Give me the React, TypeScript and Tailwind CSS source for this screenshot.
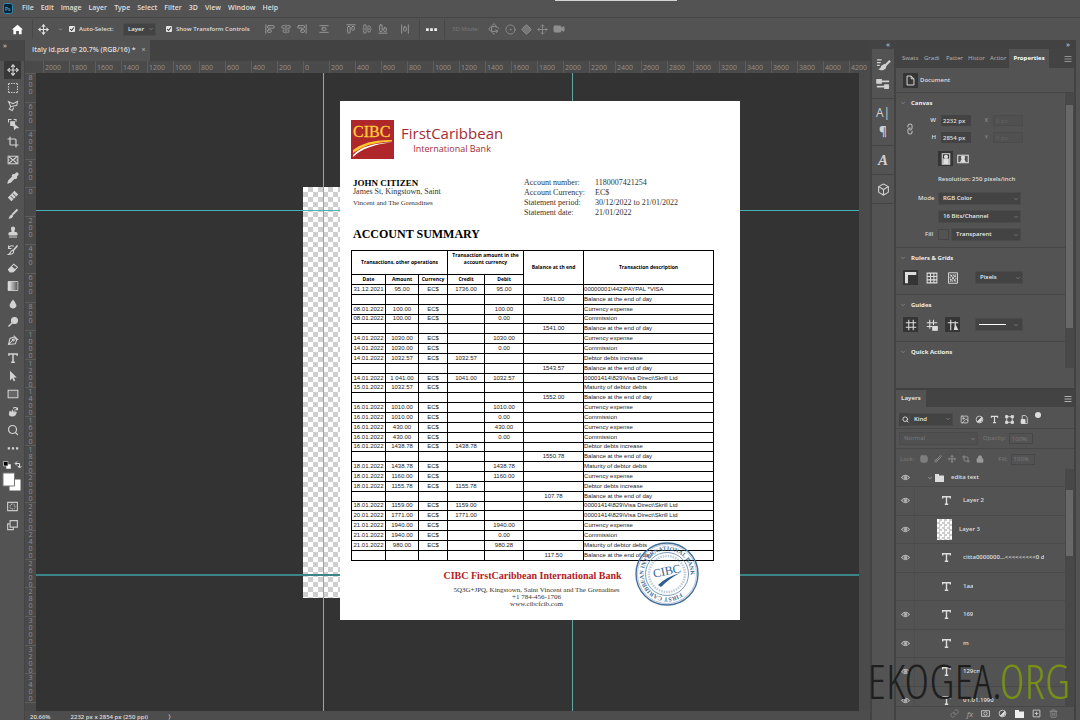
import React from 'react';
import {
  AlignCenterHorizontal, AlignCenterVertical, AlignEndHorizontal, AlignEndVertical, AlignStartHorizontal, AlignStartVertical,
  AlignVerticalSpaceAround, AlignHorizontalSpaceAround, Brush, ChevronDown, CircleDot, Crop,
  Move, Pipette, Search, SquareDashed, Stamp, Box, Grid3x3, Image as ImageIcon, Lock, Trash2, Link, Rotate3d, Diamond, Video,
} from 'lucide-react';

type Kids = { children?: React.ReactNode };

function Svg({ children, size = 12 }: Kids & { size?: number }) {
  return (
    <svg width={size} height={size} viewBox="0 0 16 16" fill="none" stroke="currentColor" strokeWidth="1.4">
      {children}
    </svg>
  );
}

const TypeT = ({ size = 12 }: { size?: number }) => (
  <Svg size={size}>
    <path d="M2.5 5V2.5h11V5M8 2.5v11M5.5 13.5h5" strokeWidth="2" />
  </Svg>
);
const Eye = () => (
  <Svg size={9}>
    <path d="M1 8q7-8 14 0q-7 8-14 0z" strokeWidth="1.8" />
    <circle cx="8" cy="8" r="2.4" fill="currentColor" />
  </Svg>
);

const lu = { size: 12, strokeWidth: 2.4 };
const tools: [string, React.ReactNode][] = [
  ['Move', <Move {...lu} />],
  ['Marquee', <SquareDashed {...lu} />],
  ['Lasso', <Svg><path d="M2 2l3 7 8-2 1-5-6 3zM5 9l-2 3 4 2 2-4" /></Svg>],
  ['Object selection', <Svg><path d="M2 6V2h4M9 2h3v3" /><path d="M5 5h5v5H5z" fill="currentColor" /><path d="M9 8l6 5-3 0-2 2z" fill="currentColor" /></Svg>],
  ['Crop', <Crop {...lu} />],
  ['Frame', <Svg><path d="M1.5 3h13v10h-13zM3 4l10 8M13 4L3 12M1.5 8h2M12.5 8h2" /></Svg>],
  ['Eyedropper', <Pipette {...lu} fill="currentColor" />],
  ['Healing', <Svg><path d="M2 10L10 2l4 4-8 8z" fill="currentColor" /><path d="M5 8l4 4M8 5l4 4" stroke="#666" /></Svg>],
  ['Brush', <Svg><path d="M14 2L7 9" strokeWidth="2.4" /><path d="M6.500 8.500q3 2 0 4.500-2 1.500-5 1 2-1 2-3 1-2 3-2.500z" fill="currentColor" stroke="none" /></Svg>],
  ['Clone stamp', <Stamp {...lu} fill="currentColor" />],
  ['History brush', <Svg><path d="M14 2L8 9" strokeWidth="2.2" /><path d="M8 8q2 3-1 5-2 1-5 1 3-2 3-4zM2 5q3-4 7-2M2 2v4h4" /></Svg>],
  ['Eraser', <Svg><path d="M2 10l7-7 5 4-6 6H4z" /><path d="M6 6.500l5 4-3 2.500H4l-2-3z" fill="currentColor" /></Svg>],
  ['Gradient', <svg width="12" height="12" viewBox="0 0 16 16"><defs><linearGradient id="tg"><stop stopColor="#eee" /><stop offset="1" stopColor="#555" /></linearGradient></defs><path d="M1.500 2h13v12h-13z" fill="url(#tg)" stroke="#ddd" /></svg>],
  ['Blur', <Svg><path d="M8 2q7 8 3 11-3 2-6 0Q1 10 8 2z" fill="currentColor" stroke="none" /></Svg>],
  ['Dodge', <Svg><circle cx="10" cy="6" r="4" fill="currentColor" /><path d="M7 9l-5 5" strokeWidth="2" /></Svg>],
  ['Pen', <Svg><path d="M2 14l2-8 5-2 4 4-2 5zM2 14l6-6M9 2l6 6" /><circle cx="8.500" cy="8" r="1.200" /></Svg>],
  ['Type', <TypeT />],
  ['Path selection', <Svg><path d="M4 1l9 9H9l2 4-2 1-2-4-3 3z" fill="currentColor" stroke="none" /></Svg>],
  ['Rectangle', <Svg><path d="M1.500 3h13v10h-13z" fill="#666" /></Svg>],
  ['Hand', <Svg><path d="M3 8q-2 6 4 6 5 0 6-6l-2-1-1 2V4L8.500 8 7 4 6 8 4 6z" fill="currentColor" stroke="none" /><path d="M8 3q4-3 6 2M14 2v3h-3" /></Svg>],
  ['Zoom', <Search {...lu} />],
  ['More tools', <Svg><path d="M1 7h3v3H1zM6.500 7h3v3h-3zM12 7h3v3h-3z" fill="currentColor" stroke="none" /></Svg>],
];

const menus = ['File', 'Edit', 'Image', 'Layer', 'Type', 'Select', 'Filter', '3D', 'View', 'Window', 'Help'];

function Check({ label }: { label: string }) {
  return (
    <label className="flex items-center gap-1 whitespace-nowrap text-[6px] font-semibold">
      <span className="grid">
        <input type="checkbox" defaultChecked className="col-start-1 row-start-1 size-[6px] appearance-none rounded-[1px] bg-[#e6e6e6]" />
        <svg viewBox="0 0 8 8" className="pointer-events-none col-start-1 row-start-1 size-[6px]" fill="none" stroke="#333" strokeWidth="1.4"><path d="M1.500 4l2 2 3-4" /></svg>
      </span>
      {label}
    </label>
  );
}

function Select({ label, value, width, dim }: { label: string; value: string; width: string; dim?: boolean }) {
  return (
    <span className={`grid items-center ${width} ${dim ? 'text-[#7d7d7d]' : 'text-[#e8e8e8]'}`}>
      <select aria-label={label} className={`col-start-1 row-start-1 h-[13px] w-full appearance-none rounded-[1px] border pl-1 text-[6px] leading-[11px] outline-none ${dim ? 'border-[#4a4a4a] bg-[#505050]' : 'border-[#4b4b4b] bg-[#434343] font-semibold'}`}>
        <option>{value}</option>
      </select>
      <ChevronDown size={6} className="pointer-events-none col-start-1 row-start-1 mr-[2px] justify-self-end text-[#a0a0a0]" />
    </span>
  );
}

function Divider() {
  return <span className="block h-5 w-px shrink-0 bg-[#484848]" />;
}

function OptionBar() {
  return (
    <div className="flex h-[23px] shrink-0 items-center border-t border-[#454545] bg-[#535353]">
      <button aria-label="Home" className="ml-3 text-white"><Svg size={11}><path d="M8 1l8 7h-2v7h-4v-5H6v5H2V8H0z" fill="currentColor" stroke="none" /></Svg></button>
      <span className="ml-[9px]"><Divider /></span>
      <button aria-label="Move tool" className="ml-[5px] flex items-center gap-[9px]"><Move size={11} strokeWidth={2.4} /><ChevronDown size={5} /></button>
      <div className="ml-[6px] flex w-[87px] items-center justify-between">
        <Check label="Auto-Select:" />
        <Select label="Auto-select target" value="Layer" width="w-[33px]" />
      </div>
      <div className="ml-[10px] w-[82px]"><Check label="Show Transform Controls" /></div>
      <div className="ml-[17px] flex items-center gap-[6px] text-[#a5a5a5]">
        <AlignStartVertical size={10} /><AlignCenterVertical size={10} /><AlignEndVertical size={10} />
        <span className="w-0" /><AlignVerticalSpaceAround size={10} />
      </div>
      <div className="ml-[17px] flex items-center gap-[6px] text-[#a5a5a5]">
        <AlignStartHorizontal size={10} /><AlignCenterHorizontal size={10} /><AlignEndHorizontal size={10} />
        <span className="w-0" /><AlignHorizontalSpaceAround size={10} />
      </div>
      <span className="ml-[9px]"><Divider /></span>
      <button aria-label="More options" className="ml-[6px] text-[#eee]"><Svg size={11}><path d="M0 6h4v4H0zM6 6h4v4H6zM12 6h4v4h-4z" fill="currentColor" stroke="none" /></Svg></button>
      <span className="ml-[7px]"><Divider /></span>
      <span className="ml-[7px] w-[26px] whitespace-nowrap text-[6px] text-[#7b7b7b]">3D Mode:</span>
      <div className="ml-[10px] flex items-center gap-[5px] text-[#8e8e8e]">
        <Rotate3d size={12} /><CircleDot size={11} /><Diamond size={11} fill="#777" /><Move size={11} /><Video size={12} fill="#8e8e8e" />
      </div>
    </div>
  );
}

function Toolbar() {
  return (
    <aside className="flex w-[25px] shrink-0 flex-col border-r border-[#444] bg-[#535353]">
      <div className="h-[21px] bg-[#464646] pl-[3px] text-[8px] leading-[9px]">»</div>
      {tools.map(([name, icon], i) => (
        <button key={name} aria-label={name} className={`ml-[4px] flex h-[18px] w-[17px] shrink-0 items-center justify-center text-[#d2d2d2] ${i === 0 ? 'bg-[#383838]' : ''}`}>{icon}</button>
      ))}
      <div className="mt-[4px] flex justify-center gap-[3px]">
        <Svg size={8}><path d="M7 7h8v8H7z" fill="#fff" /><path d="M1 1h9v9H1z" fill="#000" /></Svg>
        <Svg size={8}><path d="M3 5h8v8M6 1L2 5l4 4M8 10l3 4 4-4" strokeWidth="2" /></Svg>
      </div>
      <svg width="19" height="21" viewBox="0 0 19 21" className="ml-[2px] mt-[3px]"><path d="M7 7h12v12H7z" fill="#fff" stroke="#555" /><path d="M1 1h11.500v13H1z" fill="#fff" stroke="#777" /></svg>
      <button aria-label="Quick mask" className="ml-[6px] mt-[7px] text-[#c8c8c8]"><Svg size={13}><path d="M2 3h12v10H2z" /><circle cx="8" cy="8" r="3" strokeDasharray="1 1" /></Svg></button>
      <button aria-label="Screen mode" className="ml-[6px] mt-[6px] text-[#c8c8c8]"><Svg size={13}><path d="M5 2h9v8H5zM5 6H2v7h7v-3" /></Svg></button>
    </aside>
  );
}

const hTicks = Array.from({ length: 32 }, (_, i) => Math.abs(i - 10) * 200);
const vTicks = Array.from({ length: 22 }, (_, i) => String(Math.abs(i - 4) * 200));

const D = 'Currency expense', C = 'Commission', B = 'Balance at the end of day', V = "00001414\\829\\Visa Direct\\Skrill Ltd";
const rows: string[][] = [
  ['31.12.2021', '95.00', '1736.00', '95.00', '', "00000001\\442\\PAYPAL *VISA"],
  ['', '', '', '', '1641.00', B],
  ['08.01.2022', '100.00', '', '100.00', '', D],
  ['08.01.2022', '100.00', '', '0.00', '', C],
  ['', '', '', '', '1541.00', B],
  ['14.01.2022', '1030.00', '', '1030.00', '', D],
  ['14.01.2022', '1030.00', '', '0.00', '', C],
  ['14.01.2022', '1032.57', '1032.57', '', '', 'Debtor debts increase'],
  ['', '', '', '', '1543.57', B],
  ['14.01.2022', '1 041.00', '1041.00', '1032.57', '', V],
  ['15.01.2022', '1032.57', '', '', '', 'Maturity of debtor debts'],
  ['', '', '', '', '1552.00', B],
  ['16.01.2022', '1010.00', '', '1010.00', '', D],
  ['16.01.2022', '1010.00', '', '0.00', '', C],
  ['16.01.2022', '430.00', '', '430.00', '', D],
  ['16.01.2022', '430.00', '', '0.00', '', C],
  ['16.01.2022', '1438.78', '1438.78', '', '', 'Debtor debts increase'],
  ['', '', '', '', '1550.78', B],
  ['18.01.2022', '1438.78', '', '1438.78', '', 'Maturity of debtor debts'],
  ['18.01.2022', '1160.00', '', '1160.00', '', D],
  ['18.01.2022', '1155.78', '1155.78', '', '', 'Debtor debts increase'],
  ['', '', '', '', '107.78', B],
  ['18.01.2022', '1159.00', '1159.00', '', '', V],
  ['20.01.2022', '1771.00', '1771.00', '', '', V],
  ['21.01.2022', '1940.00', '', '1940.00', '', D],
  ['21.01.2022', '1940.00', '', '0.00', '', C],
  ['21.01.2022', '980.00', '', '980.28', '', 'Maturity of debtor debts'],
  ['', '', '', '', '117.50', B],
];

const cell = 'border border-black p-0';

function StatementTable() {
  return (
    <table className="mt-[8px] h-[311px] w-[363px] table-fixed border-collapse border border-black text-center font-['Liberation_Sans',sans-serif] text-[6px] leading-[7px] text-[#222]">
      <colgroup>
        <col className="w-[34px]" /><col className="w-[33px]" /><col className="w-[29px]" /><col className="w-[37px]" /><col className="w-[39px]" /><col className="w-[60px]" /><col />
      </colgroup>
      <thead className="font-['Open_Sans',sans-serif] text-[5px] font-bold text-black">
        <tr className="h-[24px]">
          <th colSpan={3} className={cell}>Transactions, other operations</th>
          <th colSpan={2} className={`${cell} pb-[7px]`}>Transaction amount in the<br />account currency</th>
          <th rowSpan={2} className={cell}>Balance at th end</th>
          <th rowSpan={2} className={cell}>Transaction description</th>
        </tr>
        <tr className="h-[10px]">
          {['Date', 'Amount', 'Currency', 'Credit', 'Debit'].map((h) => <th key={h} className={cell}>{h}</th>)}
        </tr>
      </thead>
      <tbody>
        {rows.map((r, i) => (
          <tr key={i} className="h-[9px]">
            <td className={cell}>{r[0]}</td>
            <td className={cell}>{r[1]}</td>
            <td className={cell}>{r[0] ? 'EC$' : ''}</td>
            <td className={cell}>{r[2]}</td>
            <td className={cell}>{r[3]}</td>
            <td className={cell}>{r[4]}</td>
            <td className={`${cell} whitespace-nowrap text-left`}>{r[5]}</td>
          </tr>
        ))}
      </tbody>
    </table>
  );
}

function Seal() {
  return (
    <svg width="64" height="64" viewBox="0 0 64 64" className="absolute right-[41px] bottom-[14px]" fill="none" stroke="#456f99">
      <defs><path id="ring" d="M32 55.500a23.500 23.500 0 1 1 .1 0" /></defs>
      <circle cx="32" cy="32" r="31" strokeWidth="1.400" />
      <circle cx="32" cy="32" r="29.500" strokeWidth=".4" />
      <circle cx="32" cy="32" r="21.500" strokeWidth=".7" />
      <circle cx="32" cy="32" r="18" strokeWidth="2.500" strokeDasharray="1.500 1" opacity=".35" />
      <g transform="rotate(-36 32 32)">
        <text fill="#456f99" stroke="none" fontSize="6" fontWeight="bold" fontFamily="Liberation Serif"><textPath href="#ring">FIRST CARIBBEAN INTERNATIONAL BANK</textPath></text>
      </g>
      <text x="18.500" y="33" fill="#2f5f92" stroke="none" fontSize="12" fontFamily="Liberation Serif" transform="rotate(-12 32 32)">CIBC</text>
      <path d="M23 43q8-8 22-12-10 5-19 14z" fill="#2f5f92" stroke="none" />
    </svg>
  );
}

function Statement() {
  const info = [['Account number:', '1180007421254'], ['Account Currency:', 'EC$'], ['Statement period:', '30/12/2022 to 21/01/2022'], ['Statement date:', '21/01/2022']];
  return (
    <article className="absolute left-[304px] top-[28px] w-[400px] bg-white pb-[12px] pl-[11px] pt-[19px] font-['Liberation_Serif',serif] text-[#333]">
      <header className="flex">
        <svg width="43" height="39" viewBox="0 0 43 39">
          <path d="M0 0h43v39H0z" fill="#b0272b" />
          <text x="2" y="17" fontSize="16" fontFamily="Liberation Serif" fill="#ffce3a" stroke="#ffce3a" strokeWidth=".3">CIBC</text>
          <path d="M2 30q14-11 39-10v1.500Q17 22 2 33z" fill="#ffc62e" />
          <path d="M2 35q11-12 39-12.500Q14 25 2 37z" fill="#fff" />
        </svg>
        <div className="ml-[7px] flex flex-col items-center pt-[4px] font-['Open_Sans',sans-serif] text-[#a52c34]">
          <span className="text-[15px] leading-[19px]">FirstCaribbean</span>
          <span className="text-[9px] leading-[11px]">International Bank</span>
        </div>
      </header>
      <div className="mt-[19px] flex pl-[2px]">
        <div className="w-[171px] text-[7px] leading-[11px]">
          <h2 className="text-[9px] font-bold leading-[11px] text-black">JOHN CITIZEN</h2>
          <p className="text-[8px] leading-[6px]">James St, Kingstown, Saint</p>
          <p className="mt-[3px]">Vincent and The Grenadines</p>
        </div>
        <dl className="text-[8px] leading-[10px]">
          {info.map(([k, v]) => <div key={k} className="flex"><dt className="w-[71px]">{k}</dt><dd>{v}</dd></div>)}
        </dl>
      </div>
      <h1 className="mt-[8px] pl-[2px] text-[12px] font-bold leading-[16px] text-black">ACCOUNT SUMMARY</h1>
      <StatementTable />
      <footer className="w-[363px] pt-[8px] text-center text-[7px] leading-[7px]">
        <p className="mb-[5px] text-[10px] font-bold leading-[13px] text-[#b31b24]">CIBC FirstCaribbean International Bank</p>
        <div className="pl-[8px]">
          <p>5Q3G+JPQ, Kingstown, Saint Vincent and The Grenadines</p>
          <p>+1 784-456-1706</p>
          <p>www.cibcfcib.com</p>
        </div>
      </footer>
      <Seal />
    </article>
  );
}

function Workspace() {
  return (
    <main className="flex min-w-0 flex-1 flex-col bg-[#464646]">
      <div className="h-[21px] shrink-0 bg-[#424242]">
        <div className="flex h-full w-[125px] items-center gap-[6px] whitespace-nowrap bg-[#535353] pl-[7px] text-[7px] font-semibold">
          Italy id.psd @ 20.7% (RGB/16) *<button aria-label="Close document" className="text-[#aaa]">×</button>
        </div>
      </div>
      <div className="flex h-[12px] shrink-0 overflow-hidden bg-[#4a4a4a] pl-[18px] text-[7px] leading-[14px] text-[#909090]">
        {hTicks.map((t, i) => <span key={i} className="w-[26px] shrink-0 border-l border-[#5d5d5d] pl-px">{t}</span>)}
      </div>
      <div className="flex min-h-0 flex-1">
        <div className="flex w-[11px] shrink-0 flex-col overflow-hidden bg-[#4a4a4a] text-center text-[7px] leading-[7px] text-[#909090]">
          {vTicks.map((t, i) => (
            <div key={i} className="flex min-h-0 flex-1 flex-col overflow-hidden border-t border-[#5d5d5d]">
              {t.split('').map((d, j) => <span key={j}>{d}</span>)}
            </div>
          ))}
          <div className="min-h-0 flex-[0.3] border-t border-[#5d5d5d]" />
        </div>
        <div className="relative min-w-0 flex-1 overflow-hidden bg-[#333]">
          <div className="absolute left-[267px] top-[114px] h-[411px] w-[290px] bg-[repeating-conic-gradient(#cfcfcf_0_25%,#fff_0_50%)] bg-size-[10px_10px]" />
          <div className="absolute left-[287px] top-0 h-full w-px bg-[#62bcbc]" />
          <div className="absolute left-[536px] top-0 h-full w-px bg-[#62a8a0]" />
          <div className="absolute left-0 top-[137px] h-px w-full bg-[#45b2b6]" />
          <div className="absolute left-0 top-[501px] h-[2px] w-full bg-[#3d8488]" />
          <Statement />
        </div>
        <div className="w-[11px] bg-[#4b4b4b]" />
      </div>
      <div className="flex h-[9px] shrink-0 items-center gap-5 overflow-hidden bg-[#4d4d4d] pl-[5px] pt-[3px] text-[6px] font-semibold">
        <span>20.66%</span><span>2232 px x 2854 px (250 ppi)</span><span>〉</span>
      </div>
    </main>
  );
}

function Strip() {
  const g = 'flex flex-col items-center justify-around border-b border-[#434343] text-[#d0d0d0]';
  return (
    <nav className="flex w-[26px] shrink-0 flex-col border-x-2 border-[#434343] bg-[#535353]">
      <div className="h-[9px] bg-[#434343] pr-1 text-right text-[8px] leading-[8px]">«</div>
      <div className={`${g} h-[50px] py-[5px]`}>
        <button aria-label="Brushes"><Svg size={15}><path d="M1 3h5M1 6h4M1 9h3" /><path d="M15 4l-5 5" strokeWidth="2.400" /><path d="M9 8q3 3-1 5-2 1-4 0 2-1 2-3z" fill="currentColor" /></Svg></button>
        <button aria-label="Brush settings"><Svg size={14}><path d="M1 5h14M1 11h14" strokeWidth="2" /><path d="M1 3h5v4H1zM10 9h4v4h-4z" fill="currentColor" /></Svg></button>
      </div>
      <div className={`${g} h-[47px] py-[3px]`}>
        <button aria-label="Character" className="text-[12px] leading-[15px]">A|</button>
        <button aria-label="Paragraph" className="text-[12px] font-bold leading-[14px]">¶</button>
      </div>
      <div className={`${g} h-[29px]`}><button aria-label="Glyphs" className="font-['Liberation_Serif',serif] text-[15px] font-bold italic">A</button></div>
      <div className={`${g} h-[29px]`}><button aria-label="3D"><Box size={13} /></button></div>
    </nav>
  );
}

function Section({ title, children, className }: Kids & { title: string; className: string }) {
  return (
    <section className={`border-b border-[#464646] ${className}`}>
      <h3 className="flex items-center gap-[5px] pl-[4px] text-[6px] font-bold leading-[20px] text-[#eee]"><ChevronDown size={6} className="text-[#aaa]" />{title}</h3>
      {children}
    </section>
  );
}

function Num({ k, v, dim }: { k: string; v: string; dim?: boolean }) {
  return (
    <label className={`flex items-center gap-[5px] text-[6px] ${dim ? 'text-[#999]' : 'font-semibold'}`}>
      <span className="w-[8px] text-right">{k}</span>
      <input defaultValue={v} disabled={dim} className={`h-[11px] w-[30px] px-[2px] ${dim ? 'border border-[#4b4b4b] bg-[#505050] text-[#666]' : 'bg-[#434343]'}`} />
    </label>
  );
}

function Toggle({ on, label, children }: Kids & { on?: boolean; label: string }) {
  return <button aria-label={label} className={`flex size-[15px] items-center justify-center ${on ? 'bg-[#353535]' : ''}`}>{children}</button>;
}

const Bars = () => <button aria-label="Panel menu" className="ml-auto mr-[2px]"><Svg size={8}><path d="M1 3h14M1 8h14M1 13h14" /></Svg></button>;

function Properties() {
  return (
    <div className="flex h-[348px] shrink-0 flex-col">
      <div className="h-[9px] bg-[#424242] pr-1 text-right text-[8px] leading-[8px]">»</div>
      <div className="flex h-[19px] shrink-0 items-center gap-[6px] bg-[#434343] pl-[6px] text-[6px] text-[#b5b5b5]">
        {['Swats', 'Gradi', 'Patter', 'Histor', 'Actior'].map((t) => <button key={t} className="w-[16px] whitespace-nowrap text-left">{t}</button>)}
        <button className="-ml-[3px] h-full w-[40px] bg-[#535353] text-[6px] font-bold text-white">Properties</button>
        <Bars />
      </div>
      <div className="flex h-[25px] shrink-0 items-center gap-[2px] border-b border-[#464646] pl-[7px] text-[6px] font-semibold">
        <Toggle label="Document" on><Svg size={11}><path d="M3 1.500h6l4 4v9H3zM9 1.500v4h4" /></Svg></Toggle>Document
      </div>
      <div className="flex min-h-0 flex-1">
        <div className="min-w-0 flex-1">
          <Section title="Canvas" className="h-[155px]">
            <div className="flex items-center pl-[9px] pt-[2px]">
              <Link size={10} className="-rotate-45 text-[#bbb]" strokeWidth={2.5} />
              <div className="ml-[13px] grid grid-cols-2 gap-x-[9px] gap-y-[6px]">
                <Num k="W" v="2232 px" /><Num k="X" v="0 px" dim /><Num k="H" v="2854 px" /><Num k="Y" v="0 px" dim />
              </div>
            </div>
            <div className="mt-[8px] flex gap-[2px] pl-[42px]">
              <Toggle label="Portrait" on><Svg size={12}><path d="M3 1h10v14H3z" /><circle cx="8" cy="5" r="2" fill="currentColor" /><path d="M5 8h6v6H5z" fill="currentColor" /></Svg></Toggle>
              <Toggle label="Landscape"><Svg size={12}><path d="M1 3h14v10H1z" /><circle cx="8" cy="6" r="2" fill="currentColor" /><path d="M5 12l2-4h2l2 4z" fill="currentColor" /></Svg></Toggle>
            </div>
            <p className="mt-[7px] pl-[42px] text-[6px] font-semibold leading-[12px]">Resolution: 250 pixels/inch</p>
            <div className="mt-[7px] flex flex-col gap-[5px] pl-[22px] text-[6px] font-semibold">
              <div className="flex items-center"><span className="w-[20px]">Mode</span><Select label="Mode" value="RGB Color" width="w-[83px]" /></div>
              <div className="flex items-center pl-[20px]"><Select label="Bit depth" value="16 Bits/Channel" width="w-[83px]" /></div>
              <div className="flex items-center pl-[7px]"><span className="w-[13px]">Fill</span><span className="size-[11px] border border-[#454545]" /><span className="w-[2px]" /><Select label="Fill" value="Transparent" width="w-[70px]" /></div>
            </div>
          </Section>
          <Section title="Rulers & Grids" className="h-[47px]">
            <div className="flex items-center gap-[6px] pl-[7px] pt-[2px]">
              <Toggle label="Rulers" on><Svg><path d="M2 15V2h13" strokeWidth="4" /></Svg></Toggle>
              <Toggle label="Grid"><Svg><path d="M1.500 1.500h13v13h-13zM6 1v14M10.500 1v14M1 6h14M1 10.500h14" /></Svg></Toggle>
              <Toggle label="Pixel grid"><Svg><path d="M2 1h12v14H2zM4 3l8 10M12 3L4 13" strokeWidth="1.200" /><circle cx="8" cy="8" r="4" strokeDasharray="2 1" /></Svg></Toggle>
              <span className="w-[3px]" /><Select label="Units" value="Pixels" width="w-[48px]" />
            </div>
          </Section>
          <Section title="Guides" className="h-[47px]">
            <div className="flex items-center gap-[6px] pl-[7px] pt-[2px]">
              <Toggle label="Show guides" on><Svg><path d="M5 1v14M11 1v14M1 5h14M1 11h14" /></Svg></Toggle>
              <Toggle label="Lock guides"><Svg><path d="M5 1v12M10 1v7M1 5h14M1 10h7" /><path d="M9 10h6v5H9z" fill="currentColor" /></Svg></Toggle>
              <Toggle label="Smart guides" on><Svg><path d="M5 1v14M1 5h14M11 3v5" /><path d="M11 8l3 6h-4z" fill="currentColor" /></Svg></Toggle>
              <span className="w-[3px]" />
              <button aria-label="Guide style" className="flex h-[13px] w-[48px] items-center justify-between border border-[#4b4b4b] bg-[#434343] px-[3px]"><span className="h-px w-[27px] bg-white" /><ChevronDown size={6} className="text-[#a0a0a0]" /></button>
            </div>
          </Section>
          <section><h3 className="flex items-center gap-[5px] pl-[4px] text-[6px] font-bold leading-[20px] text-[#eee]"><ChevronDown size={6} className="text-[#aaa]" />Quick Actions</h3></section>
        </div>
        <div className="mb-[20px] flex w-[9px] flex-col bg-[#484848] px-px pt-[12px]"><div className="h-[223px] bg-[#686868]" /></div>
      </div>
    </div>
  );
}

const layers = ['Layer 2', 'Layer 3', 'citta0000000...<<<<<<<<<0 d', '1aa', '169', 'm', '129cm', '01.01.1990'];

function Layers() {
  return (
    <div className="flex min-h-0 flex-1 flex-col border-t-2 border-[#404040] text-[6px]">
      <div className="flex h-[17px] shrink-0 items-center bg-[#434343]"><button className="h-full bg-[#535353] px-[5px] text-[6px] font-bold">Layers</button><Bars /></div>
      <div className="flex h-[22px] shrink-0 items-center gap-[5px] border-b border-[#474747] pl-[3px] pt-[3px]">
        <span className="flex items-center bg-[#434343] pl-[3px]"><Search size={7} strokeWidth={3} /><Select label="Filter kind" value="Kind" width="w-[44px]" /></span>
        <div className="ml-[2px] flex items-center gap-[6px]">
          <ImageIcon size={9} /><Svg size={9}><circle cx="8" cy="8" r="6" /><path d="M12 4a6 6 0 0 1-8 8z" fill="currentColor" /></Svg><TypeT size={9} />
          <Svg size={9}><path d="M3 3h10v10H3z" /><path d="M1 1h4v4H1zM11 1h4v4h-4zM1 11h4v4H1zM11 11h4v4h-4z" fill="currentColor" /></Svg>
          <Svg size={9}><path d="M4 1h6l3 4v10H4z" /><path d="M2 8h7v7H2z" fill="currentColor" /></Svg>
        </div>
        <span className="mb-2 ml-px size-[6px] rounded-full bg-[#ddd]" />
      </div>
      <div className="flex h-[20px] shrink-0 items-center gap-[5px] border-b border-[#474747] pl-[3px] text-[#7d7d7d]">
        <Select label="Blend mode" value="Normal" width="w-[79px]" dim />
        <label className="flex items-center gap-[3px]">Opacity:<input disabled defaultValue="100%" className="h-[11px] w-[24px] border border-[#474747] px-[2px]" /></label>
      </div>
      <div className="flex h-[20px] shrink-0 items-center gap-[6px] pl-[4px] text-[#a0a0a0]">
        <span className="text-[#7d7d7d]">Lock:</span><Grid3x3 size={8} /><Brush size={8} /><Move size={8} /><Crop size={8} /><Lock size={8} fill="#999" />
        <label className="ml-[8px] flex items-center gap-[3px] text-[#7d7d7d]">Fill:<input disabled defaultValue="100%" className="h-[11px] w-[24px] border border-[#474747] px-[2px]" /></label>
      </div>
      <div className="flex min-h-0 flex-1 overflow-hidden font-semibold">
        <div className="min-w-0 flex-1">
          <div className="flex h-[18px] items-center border-b border-[#4a4a4a]">
            <span className="flex w-[19px] justify-center text-[#b5b5b5]"><Eye /></span>
            <ChevronDown size={6} className="ml-[12px]" />
            <svg width="9" height="8" viewBox="0 0 9 8" className="ml-[2px]"><path d="M0 0h4v1.500h5V8H0z" fill="#ddd" /></svg>
            <span className="ml-[7px]">edita text</span>
          </div>
          <ul className="flex h-[228px] flex-col">
            {layers.map((l, i) => (
              <li key={l} className="flex min-h-0 flex-1 items-center border-b border-[#4a4a4a]">
                <button aria-label={`Toggle ${l}`} className="flex h-full w-[19px] shrink-0 items-center justify-center border-r border-[#4d4d4d] text-[#b5b5b5]">{i !== 3 && <Eye />}</button>
                {i === 1
                  ? <span className="ml-[22px] mr-[7px] h-[21px] w-[15px] bg-[repeating-conic-gradient(#ccc_0_25%,#fff_0_50%)] bg-size-[5px_5px]" />
                  : <span className="ml-[26px] mr-[11px]"><TypeT size={11} /></span>}
                <span className="truncate">{l}</span>
              </li>
            ))}
          </ul>
        </div>
        <div className="w-[9px] bg-[#484848] px-px pt-[21px]"><div className="h-[66px] bg-[#686868]" /></div>
      </div>
      <div className="flex h-[14px] shrink-0 items-center justify-end gap-[8px] border-t border-[#474747] pr-[16px] text-[#ddd]">
        <Link size={9} className="text-[#888]" /><i className="text-[8px] leading-[9px] text-[#aaa]">fx</i>
        <Svg size={9}><path d="M1 3h14v10H1z" /><circle cx="8" cy="8" r="3" /></Svg>
        <Svg size={9}><circle cx="8" cy="8" r="6" /><path d="M12 4a6 6 0 0 1-8 8z" fill="currentColor" /></Svg>
        <svg width="9" height="8" viewBox="0 0 9 8"><path d="M0 0h4v1.500h5V8H0z" fill="#eee" /></svg>
        <Svg size={9}><path d="M2 2h12v12H2zM8 5v6M5 8h6" /></Svg>
        <Trash2 size={9} className="text-[#999]" />
      </div>
    </div>
  );
}

export default function App() {
  return (
    <div className="relative flex h-screen min-h-0 flex-col overflow-hidden bg-[#535353] font-['Open_Sans',sans-serif] text-[#dedede]">
      <div className="flex h-[17px] shrink-0 items-center pl-[3px]">
        <svg width="10" height="11" viewBox="0 0 10 11"><rect x=".5" y=".5" width="9" height="10" rx="2" fill="#062538" stroke="#3088ac" /><text x="2" y="7.500" fontSize="5" fontFamily="Open Sans" fill="#7fd0ff">Ps</text></svg>
        <nav className="ml-[9px] flex gap-[7px] text-[7px] font-semibold">
          {menus.map((m) => <button key={m}>{m}</button>)}
        </nav>
      </div>
      <div className="absolute left-[555px] top-0 h-px w-[122px] bg-[#d5d5d5]" />
      <OptionBar />
      <div className="flex min-h-0 flex-1">
        <Toolbar />
        <Workspace />
        <Strip />
        <aside className="flex w-[178px] shrink-0 flex-col">
          <Properties />
          <Layers />
        </aside>
        <div className="w-[6px] shrink-0 border-l-2 border-[#424242]" />
      </div>
      <div className="pointer-events-none absolute right-[10px] bottom-[15px] whitespace-nowrap font-['Open_Sans_Condensed_Light','Liberation_Sans_Narrow',sans-serif] text-[48px] font-light leading-[48px] text-[#1e1e1e]">
        EKOGEA.<span className="text-[#789014]">ORG</span>
      </div>
    </div>
  );
}
